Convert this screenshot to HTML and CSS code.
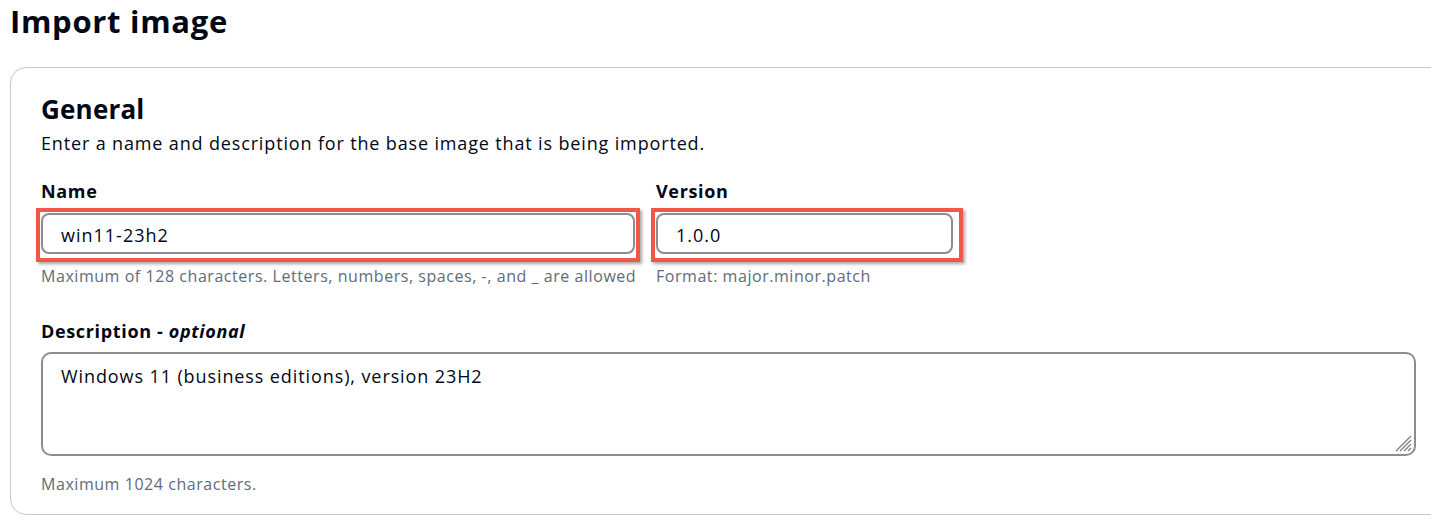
FILE: index.html
```html
<!DOCTYPE html>
<html lang="en">
<head>
<meta charset="utf-8">
<title>Import image</title>
<link rel="stylesheet" href="styles.css">
</head>
<body>
<h1 class="page-title">Import image</h1>
<section class="card">
  <h2 class="card-title">General</h2>
  <p class="card-desc">Enter a name and description for the base image that is being imported.</p>
  <div class="row">
    <div class="field field-name">
      <label class="field-label" for="name">Name</label>
      <div class="control annotated">
        <input class="text-input" id="name" type="text" value="win11-23h2">
      </div>
      <p class="hint">Maximum of 128 characters. Letters, numbers, spaces, -, and _ are allowed</p>
    </div>
    <div class="field field-version">
      <label class="field-label" for="version">Version</label>
      <div class="control annotated annotated-wide">
        <input class="text-input" id="version" type="text" value="1.0.0">
      </div>
      <p class="hint">Format: major.minor.patch</p>
    </div>
  </div>
  <div class="field field-desc">
    <label class="field-label" for="desc">Description - <i>optional</i></label>
    <div class="control textarea-wrap">
      <textarea class="text-area" id="desc">Windows 11 (business editions), version 23H2</textarea>
      <svg class="grip" width="18" height="18" viewBox="0 0 18 18" aria-hidden="true">
        <line x1="17" y1="2" x2="2" y2="17"/>
        <line x1="17" y1="6" x2="6" y2="17"/>
        <line x1="17" y1="10" x2="10" y2="17"/>
        <line x1="17" y1="14" x2="14" y2="17"/>
      </svg>
    </div>
    <p class="hint hint-desc">Maximum 1024 characters.</p>
  </div>
</section>
</body>
</html>
```
FILE: styles.css
```css
html, body {
  overflow: hidden;
}
body {
  margin: 0;
  padding: 3px 0 0 10px;
  font-family: "Open Sans", "Noto Sans", sans-serif;
  color: #000716;
  background: #ffffff;
}
.page-title {
  margin: 0;
  font-size: 31px;
  line-height: 36px;
  font-weight: 700;
  letter-spacing: 0.7px;
}
.card {
  margin-top: 28px;
  width: 1375px;
  padding: 25px 30px 20px 30px;
  border: 1px solid #c6c6cd;
  border-radius: 16px;
}
.card-title {
  margin: 0;
  font-size: 26px;
  line-height: 32px;
  font-weight: 700;
  letter-spacing: 0.2px;
}
.card-desc {
  margin: 7px 0 0 0;
  font-size: 18px;
  line-height: 22px;
  letter-spacing: 0.85px;
  color: #000716;
}
.row {
  display: flex;
  gap: 21px;
  margin-top: 26px;
}
.field-name {
  width: 594px;
}
.field-version {
  width: 297px;
}
.field-label {
  display: block;
  font-size: 18px;
  line-height: 22px;
  font-weight: 700;
  letter-spacing: 0.65px;
  margin-bottom: 11px;
}
.field-label i {
  font-style: italic;
}
.control {
  position: relative;
}
.text-input {
  display: block;
  box-sizing: border-box;
  width: 100%;
  height: 41px;
  margin: 0;
  padding: 3px 18px 0 18px;
  border: 2px solid #8c8c94;
  border-radius: 8px;
  font-family: "Open Sans", "Noto Sans", sans-serif;
  font-size: 18px;
  letter-spacing: 1px;
  color: #000716;
  background: #ffffff;
  outline: none;
}
.annotated::after {
  content: "";
  position: absolute;
  left: -5px;
  top: -5px;
  right: -5px;
  bottom: -8px;
  border: 4px solid #f0564a;
  box-shadow: 2px 2px 3px rgba(0, 0, 0, 0.35);
  pointer-events: none;
}
.annotated-wide::after {
  right: -10px;
}
.hint {
  margin: 12px 0 0 0;
  font-size: 16px;
  line-height: 20px;
  letter-spacing: 0.55px;
  color: #5f6b7a;
  white-space: nowrap;
}
.field-desc {
  margin-top: 34px;
}
.field-desc .field-label {
  margin-bottom: 10px;
}
.textarea-wrap {
  width: 1375px;
}
.text-area {
  display: block;
  box-sizing: border-box;
  width: 100%;
  height: 104px;
  margin: 0;
  padding: 11px 18px;
  border: 2px solid #8c8c94;
  border-radius: 10px;
  font-family: "Open Sans", "Noto Sans", sans-serif;
  font-size: 18px;
  line-height: 22px;
  letter-spacing: 0.9px;
  color: #000716;
  background: #ffffff;
  resize: none;
  outline: none;
}
.grip {
  position: absolute;
  right: 4px;
  bottom: 4px;
  stroke: #7d7d85;
  stroke-width: 1.3;
}
.hint-desc {
  margin-top: 18px;
}
```
